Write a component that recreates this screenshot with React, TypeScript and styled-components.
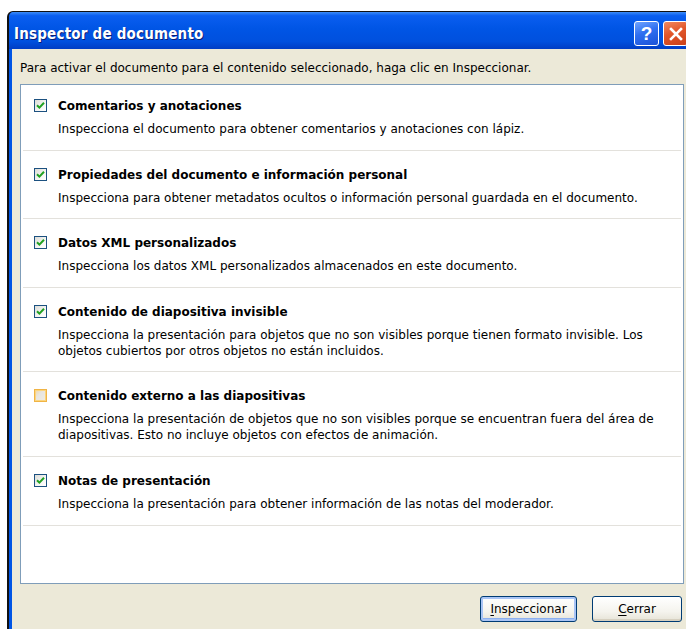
import React from 'react';
import styled, { createGlobalStyle } from 'styled-components';

const GlobalStyle = createGlobalStyle`
  html, body {
    margin: 0;
    padding: 0;
    background: #ffffff;
  }
  body {
    font-family: "DejaVu Sans", "Liberation Sans", sans-serif;
  }
`;

interface InspectorItem {
  title: string;
  lines: string[];
  checked: boolean;
}

const items: InspectorItem[] = [
  {
    title: 'Comentarios y anotaciones',
    lines: ['Inspecciona el documento para obtener comentarios y anotaciones con lápiz.'],
    checked: true,
  },
  {
    title: 'Propiedades del documento e información personal',
    lines: ['Inspecciona para obtener metadatos ocultos o información personal guardada en el documento.'],
    checked: true,
  },
  {
    title: 'Datos XML personalizados',
    lines: ['Inspecciona los datos XML personalizados almacenados en este documento.'],
    checked: true,
  },
  {
    title: 'Contenido de diapositiva invisible',
    lines: [
      'Inspecciona la presentación para objetos que no son visibles porque tienen formato invisible. Los',
      'objetos cubiertos por otros objetos no están incluidos.',
    ],
    checked: true,
  },
  {
    title: 'Contenido externo a las diapositivas',
    lines: [
      'Inspecciona la presentación de objetos que no son visibles porque se encuentran fuera del área de',
      'diapositivas. Esto no incluye objetos con efectos de animación.',
    ],
    checked: false,
  },
  {
    title: 'Notas de presentación',
    lines: ['Inspecciona la presentación para obtener información de las notas del moderador.'],
    checked: true,
  },
];

export default function App() {
  return (
    <>
      <GlobalStyle />
      <Screen>
        <Window>
          <TitleBar>
            <Caption>Inspector de documento</Caption>
            <CaptionButtons>
              <HelpButton>?</HelpButton>
              <CloseButton>
                <svg width="16" height="16" viewBox="0 0 16 16">
                  <path d="M3 3 L13 13 M13 3 L3 13" stroke="#fff" strokeWidth="2.6" strokeLinecap="square" />
                </svg>
              </CloseButton>
            </CaptionButtons>
          </TitleBar>

          <Body>
            <Intro>Para activar el documento para el contenido seleccionado, haga clic en Inspeccionar.</Intro>

            <ListBox>
              {items.map((item) => (
                <Item key={item.title}>
                  <Checkbox $checked={item.checked}>
                    {item.checked && (
                      <svg width="9" height="9" viewBox="0 0 9 9">
                        <path d="M1 4.2 L3.4 6.6 L8 1.8" stroke="#21a121" strokeWidth="2" fill="none" />
                      </svg>
                    )}
                  </Checkbox>
                  <ItemText>
                    <ItemTitle>{item.title}</ItemTitle>
                    {item.lines.map((line) => (
                      <ItemLine key={line}>{line}</ItemLine>
                    ))}
                  </ItemText>
                </Item>
              ))}
            </ListBox>

            <Footer>
              <PushButton $default $width={97}>
                <u>I</u>nspeccionar
              </PushButton>
              <PushButton $width={90}>
                <u>C</u>errar
              </PushButton>
            </Footer>
          </Body>
        </Window>
      </Screen>
    </>
  );
}

const Screen = styled.div`
  width: 686px;
  height: 629px;
  overflow: hidden;
  padding: 11px 0 0 7px;
  box-sizing: border-box;
  background: #ffffff;
`;

const Window = styled.div`
  width: 700px;
  height: 660px;
  display: flex;
  flex-direction: column;
  background: #0055e5;
  border-left: 2px solid #111;
  border-top: 1px solid #111;
  border-top-left-radius: 6px 6px;
  box-sizing: border-box;
`;

const TitleBar = styled.div`
  height: 37px;
  flex: none;
  display: flex;
  align-items: center;
  justify-content: space-between;
  padding: 0 0 0 5px;
  border-top-left-radius: 5px;
  background: linear-gradient(
    180deg,
    #3c8cf8 0%,
    #0a5ef0 10%,
    #0055e5 45%,
    #0050de 80%,
    #003dc4 100%
  );
`;

const Caption = styled.div`
  color: #ffffff;
  font-family: "DejaVu Sans Condensed", "DejaVu Sans", sans-serif;
  font-weight: bold;
  font-size: 15px;
  letter-spacing: 0.2px;
  text-shadow: 1px 1px 0 #0a1e78;
  margin-top: 6px;
`;

const CaptionButtons = styled.div`
  display: flex;
  gap: 4px;
  margin-right: 19px;
  margin-top: 6px;
`;

const HelpButton = styled.div`
  width: 23px;
  height: 23px;
  border: 1px solid #ffffff;
  border-radius: 3px;
  background: linear-gradient(160deg, #6fa4ff 0%, #2f6ff0 45%, #1a52d8 100%);
  color: #ffffff;
  font-family: "Liberation Sans", sans-serif;
  font-weight: bold;
  font-size: 19px;
  line-height: 23px;
  text-align: center;
`;

const CloseButton = styled.div`
  width: 23px;
  height: 23px;
  border: 1px solid #ffffff;
  border-radius: 3px;
  background: linear-gradient(160deg, #f08a62 0%, #e2562a 45%, #c8401a 100%);
  display: flex;
  align-items: center;
  justify-content: center;
`;

const Body = styled.div`
  flex: 1;
  margin-left: 3px;
  background: #ece9d8;
  padding: 11px 0 0 8px;
  display: flex;
  flex-direction: column;
`;

const Intro = styled.div`
  font-size: 12px;
  color: #000;
  height: 16px;
  line-height: 16px;
  margin-bottom: 8px;
`;

const ListBox = styled.div`
  width: 664px;
  height: 500px;
  box-sizing: border-box;
  border: 1px solid #7f9db9;
  background: #ffffff;
  padding: 0 2px;
`;

const Item = styled.div`
  display: flex;
  align-items: flex-start;
  padding: 16px 0 12.6px 11px;
  border-bottom: 1px solid #e3e1dc;

  &:first-child {
    padding-top: 13px;
  }
`;

const Checkbox = styled.div<{ $checked: boolean }>`
  width: 13px;
  height: 13px;
  flex: none;
  box-sizing: border-box;
  margin-top: 1px;
  display: flex;
  align-items: center;
  justify-content: center;
  border: 1px solid ${(p) => (p.$checked ? '#1c5180' : '#f0b445')};
  background: ${(p) =>
    p.$checked
      ? 'linear-gradient(135deg, #dcdcd7 0%, #f6f6f4 60%, #ffffff 100%)'
      : 'linear-gradient(135deg, #f3d7a0 0%, #e8e6e0 40%, #f0ece2 100%)'};
  box-shadow: ${(p) => (p.$checked ? 'none' : 'inset 0 0 0 1px #fbd580')};
`;

const ItemText = styled.div`
  margin-left: 11px;
  display: flex;
  flex-direction: column;
`;

const ItemTitle = styled.div`
  font-weight: bold;
  font-size: 12px;
  line-height: 16px;
  color: #000;
  margin-bottom: 7px;
`;

const ItemLine = styled.div`
  font-size: 12px;
  line-height: 16px;
  color: #000;
`;

const Footer = styled.div`
  display: flex;
  gap: 15px;
  padding-left: 460px;
  margin-top: 12px;
`;

const PushButton = styled.div<{ $default?: boolean; $width: number }>`
  width: ${(p) => p.$width}px;
  height: 26px;
  box-sizing: border-box;
  border: 1px solid #003c74;
  border-radius: 3px;
  background: linear-gradient(180deg, #ffffff 0%, #f5f4ee 60%, #e6e3d6 100%);
  box-shadow: ${(p) =>
    p.$default ? 'inset 0 0 0 2px #a9c4f5, inset 0 -1px 0 2px #8cb0f0' : 'inset 0 -2px 0 #d6d0c0'};
  font-size: 12px;
  line-height: 24px;
  text-align: center;
  color: #000;

  u {
    text-decoration: underline;
    text-underline-offset: 2px;
  }
`;
